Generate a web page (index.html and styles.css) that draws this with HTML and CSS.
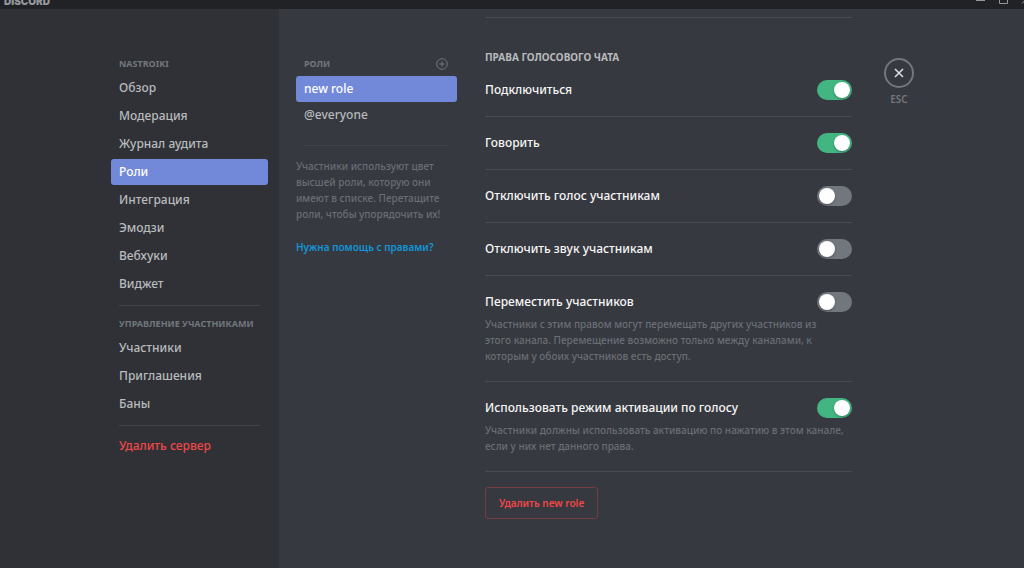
FILE: index.html
```html
<!DOCTYPE html>
<html lang="ru">
<head>
<meta charset="utf-8">
<title>Роли</title>
<link rel="stylesheet" href="styles.css">
</head>
<body>
<header class="titlebar">
  <span class="wordmark">DISCORD</span>
  <svg class="window-controls" width="50" height="9" viewBox="0 0 50 9" fill="none" stroke="#96989d" aria-hidden="true">
    <path d="M2 .5h9M25.500-4v7.500h8V-4M48 3.500l8-8M48-4.500l8 8"/>
  </svg>
</header>
<div class="app">
  <nav class="sidebar" aria-label="Настройки сервера">
    <h2 class="caption">NASTROIKI</h2>
    <ul class="nav">
      <li><a class="item" href="#overview">Обзор</a></li>
      <li><a class="item" href="#moderation">Модерация</a></li>
      <li><a class="item" href="#audit">Журнал аудита</a></li>
      <li><a class="item item-active" href="#roles" aria-current="page">Роли</a></li>
      <li><a class="item" href="#integration">Интеграция</a></li>
      <li><a class="item" href="#emoji">Эмодзи</a></li>
      <li><a class="item" href="#webhooks">Вебхуки</a></li>
      <li><a class="item" href="#widget">Виджет</a></li>
    </ul>
    <hr class="rule">
    <h2 class="caption">УПРАВЛЕНИЕ УЧАСТНИКАМИ</h2>
    <ul class="nav">
      <li><a class="item" href="#members">Участники</a></li>
      <li><a class="item" href="#invites">Приглашения</a></li>
      <li><a class="item" href="#bans">Баны</a></li>
    </ul>
    <hr class="rule">
    <button class="item item-danger" type="button">Удалить сервер</button>
  </nav>
  <section class="roles" aria-label="Список ролей">
    <div class="roles-head">
      <h2 class="caption">РОЛИ</h2>
      <button class="add" type="button" aria-label="Создать роль">
        <svg width="12" height="12" viewBox="0 0 12 12" fill="none" stroke="currentColor"><circle cx="6" cy="6" r="5.300"/><path d="M6 3.300v5.400M3.300 6h5.400"/></svg>
      </button>
    </div>
    <a class="item item-active" href="#new-role">new role</a>
    <a class="item" href="#everyone">@everyone</a>
    <hr class="rule rule-roles">
    <p class="note">Участники используют цвет высшей роли, которую они имеют в списке. Перетащите роли, чтобы упорядочить их!</p>
    <a class="help" href="#help">Нужна помощь с правами?</a>
  </section>
  <main class="rights">
    <h2 class="caption rights-title">ПРАВА ГОЛОСОВОГО ЧАТА</h2>
    <div class="right"><label for="connect">Подключиться</label><input class="switch" id="connect" type="checkbox" role="switch" checked></div>
    <div class="right"><label for="speak">Говорить</label><input class="switch" id="speak" type="checkbox" role="switch" checked></div>
    <div class="right"><label for="mute">Отключить голос участникам</label><input class="switch" id="mute" type="checkbox" role="switch"></div>
    <div class="right"><label for="deafen">Отключить звук участникам</label><input class="switch" id="deafen" type="checkbox" role="switch"></div>
    <div class="right"><label for="move">Переместить участников</label><input class="switch" id="move" type="checkbox" role="switch">
      <p class="note">Участники с этим правом могут перемещать других участников из<br>этого канала. Перемещение возможно только между каналами, к<br>которым у обоих участников есть доступ.</p></div>
    <div class="right"><label for="voice">Использовать режим активации по голосу</label><input class="switch" id="voice" type="checkbox" role="switch" checked>
      <p class="note">Участники должны использовать активацию по нажатию в этом канале, если у них нет данного права.</p></div>
    <button class="delete" type="button">Удалить new role</button>
  </main>
  <div class="close">
    <button class="close-button" type="button" aria-labelledby="esc">
      <svg width="10" height="10" viewBox="0 0 10 10" fill="none" stroke="#dcddde" stroke-width="1.600"><path d="M1 1l8 8M9 1l-8 8"/></svg>
    </button>
    <span class="esc" id="esc">ESC</span>
  </div>
</div>
</body>
</html>
```
FILE: styles.css
```css
* { box-sizing: border-box; }
body {
  margin: 0;
  min-height: 100vh;
  display: flex;
  flex-direction: column;
  background: #36393f;
  color: #b9bbbe;
  font: 500 12px/20px "Noto Sans", "Open Sans", sans-serif;
}
h2, p, ul { margin: 0; padding: 0; }
ul { list-style: none; }
a { color: inherit; text-decoration: none; }
button { font: inherit; cursor: pointer; }

.titlebar {
  height: 9px;
  padding: 0 0 0 4px;
  display: flex;
  justify-content: space-between;
  align-items: flex-end;
  overflow: hidden;
  background: #202225;
}
.wordmark {
  font: 900 10px/16px Inter, sans-serif;
  color: #96989d;
}
.window-controls { flex: none; }

.app {
  flex: 1;
  display: grid;
  grid-template-columns: 279px 178px minmax(366px, 395px) 1fr;
}

.sidebar {
  padding: 47px 11px 24px 111px;
  background: #2f3136;
}
.caption {
  padding-left: 8px;
  font-size: 9px;
  font-weight: 700;
  line-height: 16px;
  color: #72767d;
  white-space: nowrap;
}
.nav {
  display: grid;
  gap: 2px;
  padding-top: 3px;
}
.item {
  display: block;
  width: 100%;
  padding: 3px 8px;
  border: 0;
  border-radius: 3px;
  background: none;
  text-align: left;
  color: #b9bbbe;
}
.item-active {
  background: #7289da;
  color: #fff;
}
.item-danger {
  color: #f04747;
}
.rule {
  height: 1px;
  margin: 8px 8px 7px;
  border: 0;
  background: #40444b;
}
.rule + .caption { padding-top: 3px; }

.roles { padding: 47px 0 0 17px; }
.roles-head {
  display: flex;
  justify-content: space-between;
  align-items: center;
  padding: 0 9px 4px 0;
}
.add {
  display: flex;
  padding: 0;
  border: 0;
  background: none;
  color: #72767d;
}
.rule-roles { margin: 17px 8px 12px; }
.note {
  font-size: 10px;
  font-weight: 500;
  line-height: 16px;
  color: #6a6e75;
}
.help {
  display: block;
  margin-top: 17px;
  font-size: 10px;
  font-weight: 600;
  line-height: 16px;
  color: #1295d8;
}

.rights { padding: 8px 0 24px 28px; }
.rights-title {
  padding: 31px 0 7px;
  border-top: 1px solid #484b52;
  font-size: 10px;
  color: #b9bbbe;
}
.right {
  display: grid;
  grid-template-columns: 1fr auto;
  row-gap: 4px;
  padding: 16px 0;
  border-bottom: 1px solid #484b52;
  color: #f6f6f7;
}
.rights-title + .right { padding-top: 8px; }
.right .note {
  grid-column: 1 / -1;
  padding-bottom: 1px;
}
.switch {
  appearance: none;
  width: 35px;
  height: 20px;
  margin: 0;
  padding: 2px;
  display: flex;
  border-radius: 10px;
  background: #72767d;
  cursor: pointer;
}
.switch::before {
  content: "";
  width: 16px;
  height: 16px;
  border-radius: 50%;
  background: #fff;
  box-shadow: 0 1px 2px rgba(0, 0, 0, .3);
}
.switch:checked {
  justify-content: flex-end;
  background: #43b581;
}
.delete {
  margin-top: 15px;
  padding: 7px 13px;
  border: 1px solid #733d42;
  border-radius: 3px;
  background: none;
  font-size: 10px;
  font-weight: 600;
  line-height: 16px;
  color: #f04747;
}

.close {
  justify-self: start;
  display: flex;
  flex-direction: column;
  align-items: center;
  gap: 3px;
  padding: 49px 0 0 32px;
}
.close-button {
  width: 30px;
  height: 30px;
  padding: 0;
  display: grid;
  place-items: center;
  border: 2px solid #72767d;
  border-radius: 50%;
  background: none;
}
.esc {
  font-size: 10px;
  font-weight: 600;
  line-height: 16px;
  color: #72767d;
}
```
